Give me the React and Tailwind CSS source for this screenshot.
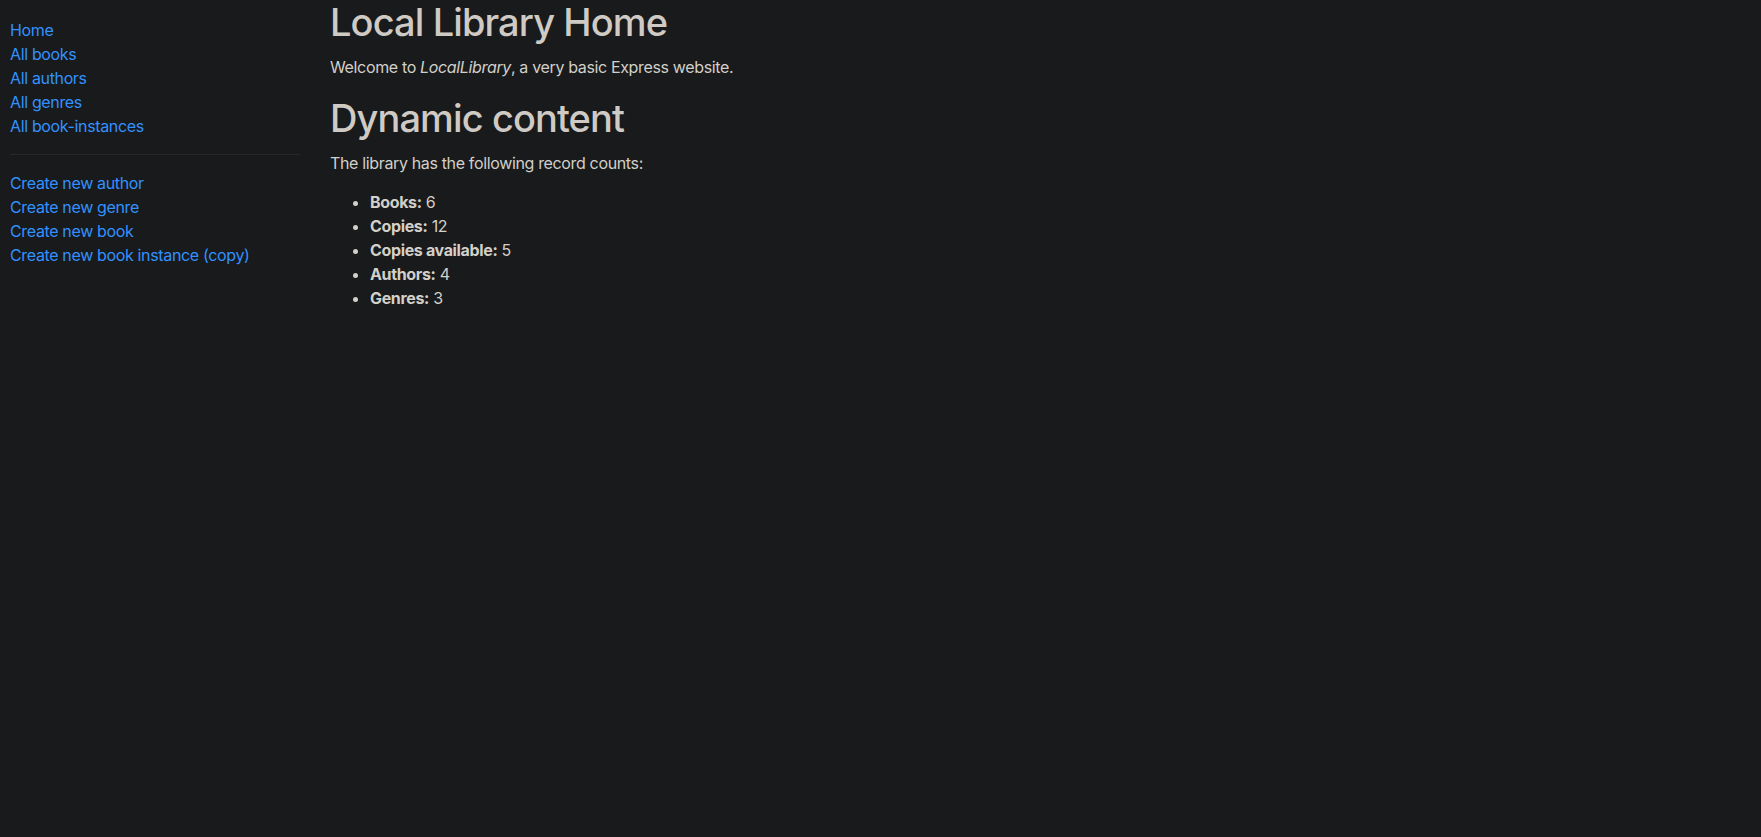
import React from 'react';

const browseLinks = ['Home', 'All books', 'All authors', 'All genres', 'All book-instances'];
const createLinks = ['Create new author', 'Create new genre', 'Create new book', 'Create new book instance (copy)'];

const counts = [
  { label: 'Books:', value: 6 },
  { label: 'Copies:', value: 12 },
  { label: 'Copies available:', value: 5 },
  { label: 'Authors:', value: 4 },
  { label: 'Genres:', value: 3 },
];

export default function App() {
  return (
    <div
      className="min-h-screen w-full bg-[#181a1b] text-[#d3cfc9] flex text-base leading-6 tracking-[-0.35px]"
      style={{ fontFamily: 'Inter, "Noto Sans", sans-serif' }}
    >
      {/* Sidebar */}
      <div className="w-[300px] shrink-0 pl-[10px] pt-[18px]">
        <ul>
          {browseLinks.map((l) => (
            <li key={l}>
              <a href="#" className="text-[#3391ff]">{l}</a>
            </li>
          ))}
        </ul>
        <hr className="my-4 border-t border-[#26292b]" />
        <ul>
          {createLinks.map((l) => (
            <li key={l}>
              <a href="#" className="text-[#3391ff]">{l}</a>
            </li>
          ))}
        </ul>
      </div>

      {/* Main content */}
      <div className="flex-1 pl-[30px]">
        <h1 className="text-[38px] leading-[44px] font-medium tracking-[-0.9px] mb-[11px] text-[#cfcac4]">
          Local Library Home
        </h1>
        <p className="mb-[17px]">
          Welcome to <em>LocalLibrary</em>, a very basic Express website.
        </p>
        <h2 className="text-[38px] leading-[44px] font-medium tracking-[-0.9px] mb-[11px] text-[#cfcac4]">
          Dynamic content
        </h2>
        <p className="mb-[15px]">The library has the following record counts:</p>
        <ul className="list-disc pl-10">
          {counts.map((c) => (
            <li key={c.label}>
              <strong className="font-bold">{c.label}</strong> {c.value}
            </li>
          ))}
        </ul>
      </div>
    </div>
  );
}
